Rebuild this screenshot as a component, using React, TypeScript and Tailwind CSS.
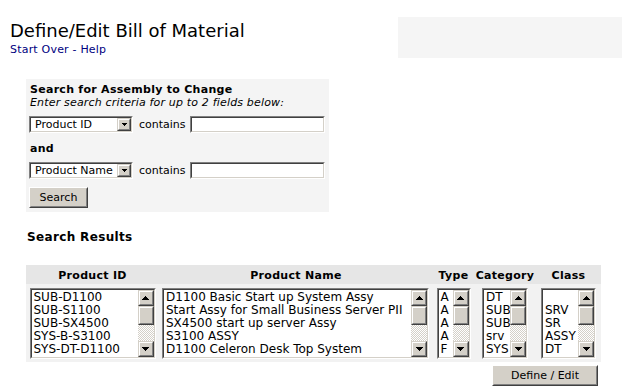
import React from "react";

const sunkOut = "border border-t-[#808080] border-l-[#808080] border-b-white border-r-white";
const sunkIn = "border border-t-[#404040] border-l-[#404040] border-b-[#d4d0c8] border-r-[#d4d0c8]";
const raisedOut = "border border-t-[#d4d0c8] border-l-[#d4d0c8] border-b-[#404040] border-r-[#404040]";
const raisedIn = "border border-t-white border-l-white border-b-[#808080] border-r-[#808080] bg-[#d4d0c8]";

// little pixel triangle, like the old win32 arrows
function Arrow({ dir, size = 4 }: { dir: "up" | "down"; size?: number }) {
  const rows = Array.from({ length: size }, (_, i) => i);
  const w = size * 2 - 1;
  return (
    <svg width={w} height={size} viewBox={`0 0 ${w} ${size}`} shapeRendering="crispEdges">
      {rows.map((i) => (
        <rect key={i} x={size - 1 - i} y={dir === "up" ? i : size - 1 - i} width={2 * i + 1} height={1} fill="#000" />
      ))}
    </svg>
  );
}

function ScrollBtn({ dir }: { dir: "up" | "down" }) {
  return (
    <div className={`w-[16px] h-[16px] shrink-0 ${raisedOut}`}>
      <div className={`w-full h-full flex items-center justify-center ${raisedIn}`}>
        <Arrow dir={dir} />
      </div>
    </div>
  );
}

function ListBox({ w, items }: { w: string; items: string[] }) {
  return (
    <div className={`${w} h-[71px] ${sunkOut}`}>
      <div className={`h-full flex bg-white ${sunkIn}`}>
        <div className="flex-1 min-w-0 overflow-hidden pl-[2px] pt-[1px] text-[12px] leading-[13px] whitespace-nowrap text-black">
          {items.map((t, i) => (
            <div key={i}>{t || "\u00a0"}</div>
          ))}
        </div>
        <div className="w-[16px] shrink-0 flex flex-col">
          <ScrollBtn dir="up" />
          <div className={`h-[19px] shrink-0 ${raisedOut}`}>
            <div className={`h-full ${raisedIn}`} />
          </div>
          <div className="flex-1 bg-[image:repeating-conic-gradient(#d4d0c8_0_25%,#ffffff_0_50%)] bg-[length:2px_2px]" />
          <ScrollBtn dir="down" />
        </div>
      </div>
    </div>
  );
}

function Select({ label }: { label: string }) {
  return (
    <div className={`w-[104px] h-[17px] ${sunkOut}`}>
      <div className={`h-full flex bg-white ${sunkIn}`}>
        <div className="flex-1 pl-[4px] text-[11px] leading-[13px] whitespace-nowrap overflow-hidden">{label}</div>
        <div className={`w-[14px] h-full ${raisedOut}`}>
          <div className={`w-full h-full flex items-center justify-center ${raisedIn}`}>
            <Arrow dir="down" size={3} />
          </div>
        </div>
      </div>
    </div>
  );
}

function TextBox() {
  return (
    <div className={`w-[135px] h-[17px] ${sunkOut}`}>
      <div className={`h-full bg-white ${sunkIn}`} />
    </div>
  );
}

function Button({ w, label }: { w: string; label: string }) {
  return (
    <div className={`${w} h-[21px] border border-t-white border-l-white border-b-[#404040] border-r-[#404040]`}>
      <div className="h-full flex items-center justify-center bg-[#d4d0c8] border border-t-[#d4d0c8] border-l-[#d4d0c8] border-b-[#808080] border-r-[#808080] text-[11px] leading-[13px] text-black">
        {label}
      </div>
    </div>
  );
}

const cols = [
  { head: "Product ID", cell: "w-[133px] justify-center", list: "w-[126px]", items: ["SUB-D1100", "SUB-S1100", "SUB-SX4500", "SYS-B-S3100", "SYS-DT-D1100"] },
  {
    head: "Product Name",
    cell: "w-[274px] pl-[3px]",
    list: "w-[267px]",
    items: [
      "D1100 Basic Start up System Assy",
      "Start Assy for Small Business Server PII",
      "SX4500 start up server Assy",
      "S3100 ASSY",
      "D1100 Celeron Desk Top System",
    ],
  },
  { head: "Type", cell: "w-[41px] justify-center", list: "w-[34px]", items: ["A", "A", "A", "A", "F"] },
  { head: "Category", cell: "w-[62px] justify-center", list: "w-[46px]", items: ["DT", "SUB", "SUB", "srv", "SYS"] },
  { head: "Class", cell: "w-[65px] justify-center", list: "w-[55px]", items: ["", "SRV", "SR", "ASSY", "DT"] },
];

const headW = ["w-[133px]", "w-[274px]", "w-[41px]", "w-[62px]", "w-[65px]"];

export default function App() {
  return (
    <div className="w-[622px] h-[390px] bg-white overflow-hidden font-['DejaVu_Sans',Verdana,sans-serif] text-black">
      {/* top: title + grey box */}
      <div className="flex items-start">
        <div className="pl-[10px] pt-[21px]">
          <h1 className="text-[18px] leading-[20px] font-normal">Define/Edit Bill of Material</h1>
          <div className="mt-[2px] text-[11px] leading-[13px] tracking-[0.2px] text-[#000080]">
            <a>Start Over</a> - <a>Help</a>
          </div>
        </div>
        <div className="ml-auto mt-[17px] w-[224px] h-[41px] bg-[#f5f5f5]" />
      </div>

      {/* search form */}
      <div className="ml-[26px] mt-[21px] w-[303px] bg-[#f4f4f4] pt-[4px] pb-[4px] pl-[3px] text-[11px] leading-[13px]">
        <div className="pl-[1px] font-bold tracking-[0.28px]">Search for Assembly to Change</div>
        <div className="pl-[1px] italic tracking-[0.17px]">Enter search criteria for up to 2 fields below:</div>
        <div className="mt-[7px] flex items-center">
          <Select label="Product ID" />
          <span className="ml-[6px] mr-[4px]">contains</span>
          <TextBox />
        </div>
        <div className="mt-[9px] pl-[1px] font-bold tracking-[0.28px]">and</div>
        <div className="mt-[7px] flex items-center">
          <Select label="Product Name" />
          <span className="ml-[6px] mr-[4px]">contains</span>
          <TextBox />
        </div>
        <div className="mt-[8px]">
          <Button w="w-[59px]" label="Search" />
        </div>
      </div>

      <div className="ml-[26px] mt-[18px] pl-[1px] text-[12px] leading-[15px] font-bold tracking-[0.35px]">Search Results</div>

      {/* results table */}
      <div className="ml-[26px] mt-[20px] w-[575px]">
        <div className="flex h-[19px] bg-[#e6e6e6] pt-[4px] text-[11px] leading-[13px] font-bold tracking-[0.3px]">
          {cols.map((c, i) => (
            <div key={c.head} className={`${headW[i]} text-center`}>
              {c.head}
            </div>
          ))}
        </div>
        <div className="flex bg-[#f2f2f2] pt-[4px] pb-[3px]">
          {cols.map((c) => (
            <div key={c.head} className={`flex ${c.cell}`}>
              <ListBox w={c.list} items={c.items} />
            </div>
          ))}
        </div>
        <div className="mt-[3px] flex justify-end pr-[3px]">
          <Button w="w-[106px]" label="Define / Edit" />
        </div>
      </div>
    </div>
  );
}
